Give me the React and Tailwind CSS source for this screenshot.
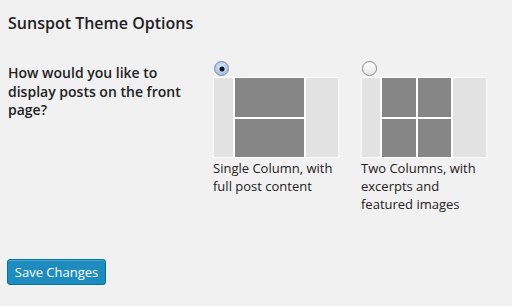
import React from "react";

function Radio({ checked }) {
  return (
    <span
      className={
        "relative block w-[15px] h-[15px] rounded-full border border-[#8a8a8a] " +
        (checked
          ? "bg-[radial-gradient(circle_at_50%_40%,#dbe8fb,#8db4ee)]"
          : "bg-[linear-gradient(#ffffff,#e6e6e6)]")
      }
    >
      {checked && (
        <span className="absolute left-1/2 top-1/2 w-[5px] h-[5px] -translate-x-1/2 -translate-y-1/2 rounded-full bg-[#111]" />
      )}
    </span>
  );
}

function SingleLayout() {
  return (
    <div className="flex w-[126px] h-[81px] bg-white p-[1px] gap-[2px]">
      <div className="w-[19px] bg-[#e1e2e1]" />
      <div className="w-[69px] flex flex-col gap-[2px]">
        <div className="flex-1 bg-[#868686]" />
        <div className="flex-1 bg-[#868686]" />
      </div>
      <div className="flex-1 bg-[#e1e2e1]" />
    </div>
  );
}

function TwoLayout() {
  return (
    <div className="flex w-[126px] h-[81px] bg-white p-[1px] gap-[2px]">
      <div className="w-[18px] bg-[#e1e2e1]" />
      <div className="w-[69px] grid grid-cols-2 grid-rows-2 gap-[2px]">
        <div className="bg-[#868686]" />
        <div className="bg-[#868686]" />
        <div className="bg-[#868686]" />
        <div className="bg-[#868686]" />
      </div>
      <div className="flex-1 bg-[#e1e2e1]" />
    </div>
  );
}

export default function App() {
  return (
    <div
      className="w-[512px] h-[306px] bg-[#f1f1f1] text-[#222] px-2 pt-[12px] overflow-hidden"
      style={{ fontFamily: '"Open Sans", "Noto Sans", sans-serif' }}
    >
      <h2 className="text-[16px] font-semibold leading-[22px] text-[#222]">
        Sunspot Theme Options
      </h2>
      <div className="flex mt-[27px]">
        <div className="w-[205px] pt-[3px] pr-[30px]">
          <div className="text-[14px] font-semibold leading-[18.5px]">
            How would you like to display posts on the front page?
          </div>
        </div>
        <div className="flex gap-[22px]">
          <div className="w-[126px]">
            <div className="pl-[1px] mb-[1px]">
              <Radio checked />
            </div>
            <SingleLayout />
            <div className="text-[13px] leading-[18px] mt-[1px]">
              Single Column, with full post content
            </div>
          </div>
          <div className="w-[126px]">
            <div className="pl-[1px] mb-[1px]">
              <Radio />
            </div>
            <TwoLayout />
            <div className="text-[13px] leading-[18px] mt-[1px]">
              Two Columns, with excerpts and featured images
            </div>
          </div>
        </div>
      </div>
      <button className="mt-[46px] ml-[-1px] w-[99px] h-[26px] bg-[#1e8cbe] border border-[#0074a2] rounded-[3px] text-white text-[13px] leading-[24px] shadow-[inset_0_1px_0_rgba(120,200,230,0.5)]">
        Save Changes
      </button>
    </div>
  );
}
